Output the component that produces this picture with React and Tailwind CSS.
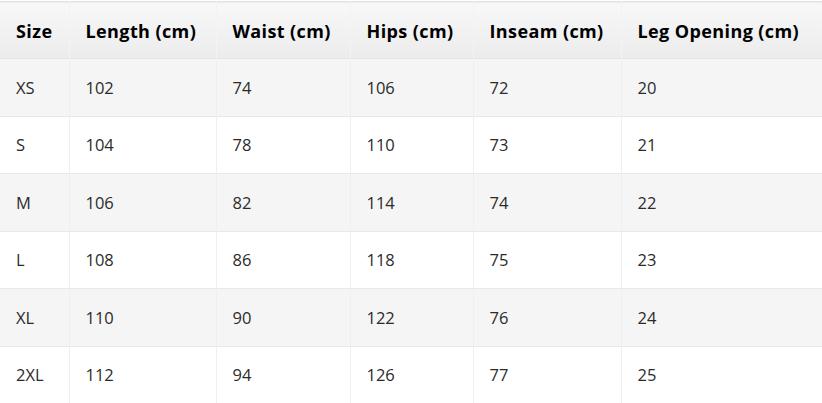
const headers = ["Size", "Length (cm)", "Waist (cm)", "Hips (cm)", "Inseam (cm)", "Leg Opening (cm)"];
const widths = ["w-[69px]", "w-[147px]", "w-[134px]", "w-[123px]", "w-[148px]", "w-[201px]"];

const rows = [
  ["XS", 102, 74, 106, 72, 20],
  ["S", 104, 78, 110, 73, 21],
  ["M", 106, 82, 114, 74, 22],
  ["L", 108, 86, 118, 75, 23],
  ["XL", 110, 90, 122, 76, 24],
  ["2XL", 112, 94, 126, 77, 25],
];

export default function App() {
  return (
    <div className="w-[822px] h-[403px] overflow-hidden bg-white pt-px font-['Open_Sans','Noto_Sans',sans-serif]">
      <table className="w-[822px] table-fixed border-collapse text-[16.5px]">
        <colgroup>
          {widths.map((w, i) => <col key={i} className={w} />)}
        </colgroup>
        <thead>
          <tr className="h-[57px] border-t border-b border-[#e3e3e3] bg-gradient-to-b from-[#f8f8f8] to-[#ececec]">
            {headers.map((h, i) => (
              <th
                key={h}
                className={`px-4 pt-[2px] text-left text-[18px] font-bold text-black whitespace-nowrap tracking-[0.4px] ${i > 0 ? "border-l border-[#f3f3f3]" : ""}`}
              >
                {h}
              </th>
            ))}
          </tr>
        </thead>
        <tbody>
          {rows.map((r, ri) => (
            <tr key={r[0]} className={`h-[57.5px] border-b border-[#e8e8e8] ${ri % 2 === 0 ? "bg-[#f5f5f5]" : "bg-white"}`}>
              {r.map((c, ci) => (
                <td
                  key={ci}
                  className={`px-4 pt-[2px] text-left text-[#2b2b2b] ${ci > 0 ? "border-l border-[#efefef]" : ""}`}
                >
                  {c}
                </td>
              ))}
            </tr>
          ))}
        </tbody>
      </table>
    </div>
  );
}
